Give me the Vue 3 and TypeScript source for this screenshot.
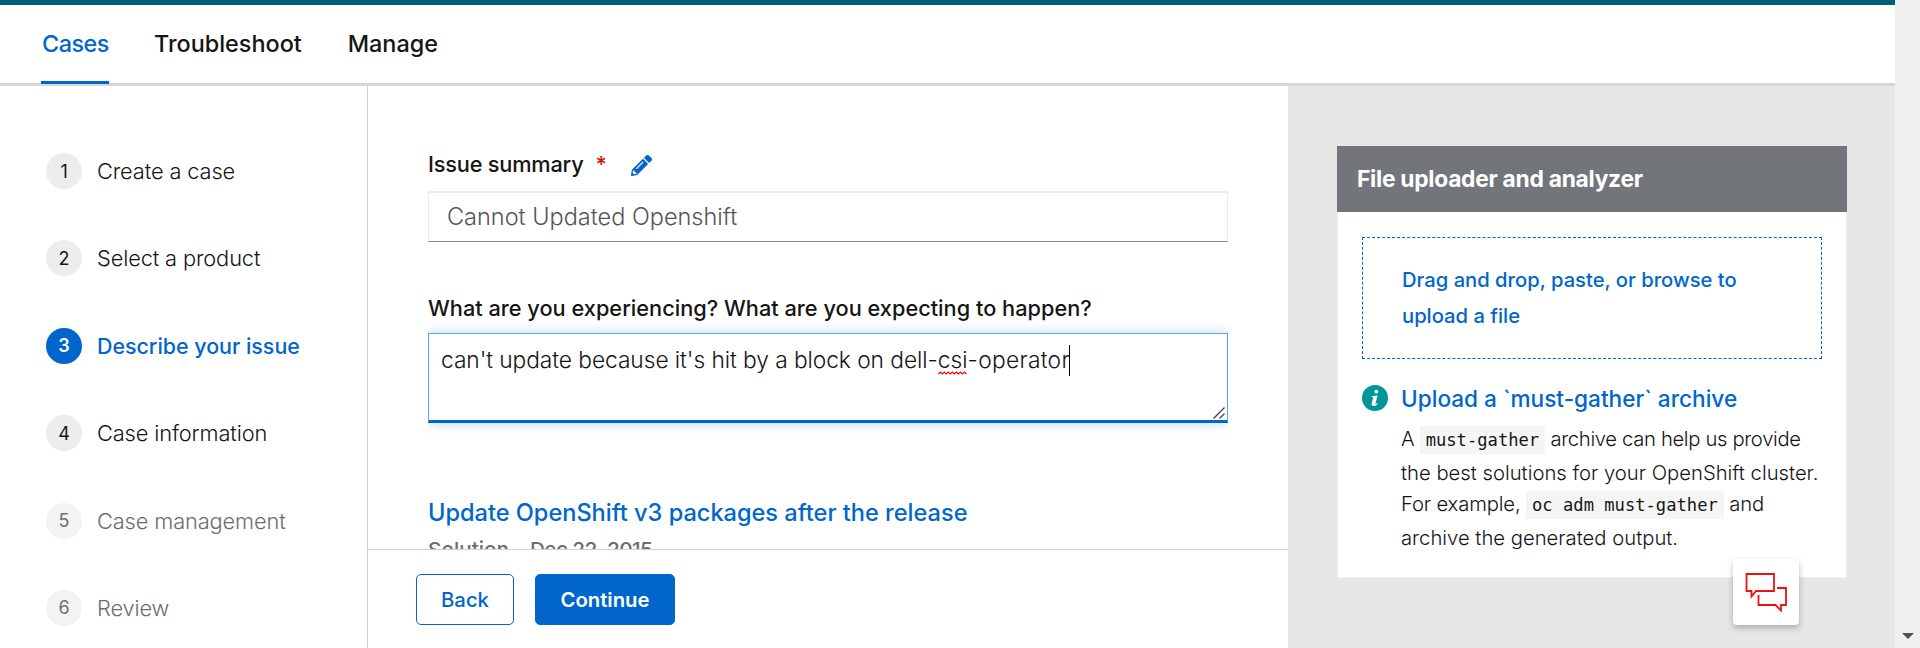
<script setup lang="ts">
interface Step {
  label: string
  state: 'open' | 'current' | 'disabled'
}

const tabs: string[] = ['Cases', 'Troubleshoot', 'Manage']

const steps: Step[] = [
  { label: 'Create a case', state: 'open' },
  { label: 'Select a product', state: 'open' },
  { label: 'Describe your issue', state: 'current' },
  { label: 'Case information', state: 'open' },
  { label: 'Case management', state: 'disabled' },
  { label: 'Review', state: 'disabled' },
]

const summary = 'Cannot Updated Openshift'
</script>

<template>
  <div class="window">
    <div class="page">
      <nav class="tabs">
        <a v-for="(tab, i) in tabs" :key="tab" class="tab" :class="{ active: i === 0 }">{{ tab }}</a>
      </nav>

      <div class="body">
        <aside class="steps">
          <div v-for="(step, i) in steps" :key="step.label" class="step" :class="step.state">
            <span class="num">{{ i + 1 }}</span>
            <span class="label">{{ step.label }}</span>
          </div>
        </aside>

        <main class="main">
          <div class="form">
            <div class="field-label">
              <span class="summary-label">Issue summary</span>
              <span class="required">*</span>
              <svg class="pencil" viewBox="0 0 512 512">
                <path
                  d="M498 142l-46 46c-5 5-13 5-17 0L324 77c-5-5-5-12 0-17l46-46c19-19 49-19 68 0l60 60c19 19 19 49 0 68zm-214-42L22 362 0 484c-3 16 12 30 28 28l122-22 262-262c5-5 5-13 0-17L301 100c-4-5-12-5-17 0zM124 340c-5-6-5-14 0-20l154-154c6-5 14-5 20 0s5 14 0 20L144 340c-6 5-14 5-20 0zm-36 84h48v36l-64 12-32-32 12-64h36v48z"
                />
              </svg>
            </div>
            <input class="summary" type="text" :value="summary" />

            <div class="field-label question">What are you experiencing? What are you expecting to happen?</div>
            <div class="textarea">
              <span class="typed">can't update because it's hit by a block on dell-</span><span class="misspelt">csi<svg class="squiggle" viewBox="0 0 29 4"><path d="M0 3l2-2 2 2 2-2 2 2 2-2 2 2 2-2 2 2 2-2 2 2 2-2 2 2 2-2 2 2" /></svg></span><span class="tail">-operator</span><span class="caret"></span>
              <svg class="grip" viewBox="0 0 12 12"><path d="M.5 11.5l11-11M6.5 11.5l5-5" /></svg>
            </div>

            <a class="result">Update OpenShift v3 packages after the release</a>
            <div class="meta"><span>Solution</span><span class="date">Dec 22, 2015</span></div>
          </div>

          <footer class="actions">
            <button class="btn back">Back</button>
            <button class="btn continue">Continue</button>
          </footer>
        </main>

        <aside class="side">
          <section class="card">
            <h2>File uploader and analyzer</h2>
            <div class="card-body">
              <div class="drop">Drag and drop, paste, or browse to<br />upload a file</div>
              <div class="tip">
                <svg class="info" viewBox="0 0 512 512">
                  <path
                    fill-rule="evenodd"
                    d="M256 0a256 256 0 1 0 0 512a256 256 0 1 0 0-512zM282 92a38 38 0 1 1 0 76a38 38 0 1 1 0-76zM190 220l104-14c8-1 12 4 10 12l-37 142c-3 13 4 17 14 8l14-14 14 14c-26 34-54 50-84 46-32-4-42-24-34-56l28-108c3-10-2-14-12-14h-20z"
                  />
                </svg>
                <div class="tip-text">
                  <a class="tip-title">Upload a `must-gather` archive</a>
                  <div class="line snug">A <code>must-gather</code> archive can help us provide</div>
                  <div class="line">the best solutions for your OpenShift cluster.</div>
                  <div class="line tight">For example, <code>oc adm must-gather</code> and</div>
                  <div class="line">archive the generated output.</div>
                </div>
              </div>
            </div>
          </section>
        </aside>
      </div>

      <div class="chat">
        <svg viewBox="0 0 42 39">
          <path d="M1.500 1h27.500v17H11L6.500 23.500V18h-5z" />
          <path d="M32 15h9v17h-5v5.500L30.500 32H13.500V22" />
        </svg>
      </div>
    </div>

    <div class="scrollbar"><span class="arrow"></span></div>
  </div>
</template>

<style>
html,
body {
  margin: 0;
  overflow: hidden;
}
</style>

<style scoped>
.window {
  display: flex;
  width: 1920px;
  height: 648px;
  overflow: hidden;
  background: #fff;
  color: #151515;
  font-family: Inter, "Open Sans", sans-serif;
  font-weight: 300;
}
.window * {
  box-sizing: border-box;
}
.page {
  position: relative;
  display: flex;
  flex-direction: column;
  width: 1895px;
  height: 648px;
  border-top: 5px solid #005f78;
}
.scrollbar {
  display: flex;
  flex: 1;
  align-items: flex-end;
  justify-content: center;
  padding-bottom: 9px;
  background: #f0f0f0;
}
.arrow {
  border: 6px solid transparent;
  border-top-color: #505050;
  border-bottom: 0;
}

.tabs {
  display: flex;
  flex: none;
  gap: 44px;
  height: 81px;
  padding-left: 41px;
  border-bottom: 3px solid #d6d6d6;
}
.tab {
  height: 79px;
  padding: 0 1px;
  line-height: 77px;
  font-size: 23.4px;
  font-weight: 500;
}
.tab.active {
  width: 68px;
  border-bottom: 3px solid #06c;
  color: #06c;
  letter-spacing: -0.5px;
}

.body {
  display: flex;
  flex: 1;
  min-height: 0;
}

.steps {
  display: flex;
  flex: none;
  flex-direction: column;
  gap: 51.4px;
  width: 368px;
  padding: 67px 0 0 46px;
  border-right: 1px solid #d2d2d2;
}
.step {
  display: flex;
  flex: none;
  align-items: center;
  gap: 15px;
  height: 36px;
  font-size: 21.8px;
  letter-spacing: -0.12px;
}
.num {
  display: flex;
  align-items: center;
  justify-content: center;
  width: 36px;
  height: 36px;
  border-radius: 50%;
  background: #ededed;
  font-size: 18px;
  font-weight: 400;
}
.current {
  color: #06c;
  font-size: 21.4px;
  font-weight: 500;
  letter-spacing: 0;
}
.current .num {
  background: #06c;
  color: #fff;
  font-weight: 600;
}
.disabled {
  color: #6a6e73;
}
.disabled .num {
  background: #f3f3f3;
}

.main {
  display: flex;
  flex: none;
  flex-direction: column;
  width: 920px;
}
.form {
  flex: 1;
  min-height: 0;
  padding: 63px 60px 0;
  overflow: hidden;
}
.field-label {
  display: flex;
  align-items: center;
  height: 30px;
  font-size: 21.75px;
  font-weight: 500;
}
.summary-label {
  letter-spacing: -0.2px;
}
.required {
  margin-left: 12px;
  color: #c9190b;
}
.pencil {
  width: 21px;
  height: 21px;
  margin: 2px 0 0 24px;
  fill: #06c;
}
.summary {
  display: block;
  width: 800px;
  height: 51px;
  margin-top: 12px;
  padding: 0 0 1px 18px;
  border: 1px solid #ededed;
  border-top-width: 2px;
  border-bottom: 1px solid #8a8d90;
  outline: 0;
  color: #555;
  font-family: inherit;
  font-size: 23.5px;
  font-weight: 300;
}
.question {
  margin-top: 51px;
  white-space: nowrap;
}
.textarea {
  position: relative;
  width: 800px;
  height: 90px;
  margin-top: 10px;
  padding: 9px 12px;
  border: 1px solid #5ba8e6;
  border-bottom: 3px solid #06c;
  box-shadow: 0 0 12px rgba(0, 110, 210, 0.28);
  clip-path: inset(-14px 0 -14px 0);
  font-size: 22.78px;
  line-height: 34px;
  white-space: nowrap;
}
.typed {
  letter-spacing: -0.07px;
}
.misspelt {
  position: relative;
}
.tail {
  letter-spacing: 0.3px;
}
.squiggle {
  position: absolute;
  left: 0;
  bottom: -2px;
  width: 100%;
  height: 4px;
  fill: none;
  stroke: #f00;
  stroke-width: 1.1;
}
.caret {
  display: inline-block;
  width: 1px;
  height: 31px;
  margin-left: -1px;
  background: #000;
  vertical-align: -8px;
}
.grip {
  position: absolute;
  right: 2px;
  bottom: 1px;
  width: 12px;
  height: 12px;
  fill: none;
  stroke: #444;
  stroke-width: 1.3;
}
.result {
  display: block;
  margin-top: 75px;
  color: #06c;
  font-size: 23.56px;
  font-weight: 500;
  line-height: 30px;
  white-space: nowrap;
}
.meta {
  display: flex;
  gap: 21px;
  margin-top: 8px;
  color: #6a6e73;
  font-size: 20.76px;
  font-weight: 500;
  line-height: 28px;
}
.date {
  letter-spacing: -0.6px;
}

.actions {
  display: flex;
  flex: none;
  align-items: flex-start;
  gap: 21px;
  height: 99px;
  padding: 24px 0 0 48px;
  border-top: 1px solid #d2d2d2;
  background: #fff;
}
.btn {
  height: 51px;
  padding: 0;
  border: 1px solid #06c;
  border-radius: 5px;
  font-family: inherit;
  font-size: 20.28px;
  font-weight: 600;
}
.back {
  width: 98px;
  background: #fff;
  color: #06c;
  font-weight: 500;
}
.continue {
  width: 140px;
  background: #06c;
  color: #fff;
}

.side {
  flex: 1;
  padding: 60px 48px 0 49px;
  background: #e6e6e6;
}
.card {
  width: 510px;
  height: 432px;
  border: 1px solid #eee;
  border-top: 0;
  background: #fff;
}
.card h2 {
  height: 66px;
  margin: 0 -1px;
  padding-left: 20px;
  background: #72767b;
  color: #fff;
  font-size: 22.8px;
  font-weight: 700;
  letter-spacing: -0.28px;
  line-height: 66px;
}
.card-body {
  padding: 25px 24px 0;
}
.drop {
  width: 460px;
  height: 122px;
  padding: 24px 0 0 39px;
  border: 1px dashed #06c;
  color: #06c;
  font-size: 20.2px;
  font-weight: 500;
  line-height: 36px;
  white-space: nowrap;
}
.tip {
  display: flex;
  gap: 13px;
  padding-top: 24px;
}
.info {
  flex: none;
  width: 26px;
  height: 26px;
  margin-top: 2px;
  fill: #009596;
}
.tip-text {
  white-space: nowrap;
}
.tip-title {
  display: block;
  margin-bottom: 9px;
  color: #06c;
  font-size: 22.6px;
  font-weight: 500;
  line-height: 32px;
}
.line {
  height: 30px;
  margin-bottom: 4px;
  font-size: 20.25px;
  line-height: 30px;
}
.line.snug {
  letter-spacing: -0.35px;
}
.line.tight {
  margin-top: -3px;
  letter-spacing: -0.15px;
}
code {
  display: inline-block;
  height: 28px;
  padding: 0 6px;
  background: #f5f5f5;
  font-family: "DejaVu Sans Mono", monospace;
  font-size: 17.15px;
  font-weight: 400;
  letter-spacing: 0;
  line-height: 28px;
}

.chat {
  position: absolute;
  left: 1733px;
  top: 554px;
  width: 66px;
  height: 66px;
  padding: 14px 12px;
  border-radius: 4px;
  background: #fff;
  box-shadow: 0 3px 6px rgba(0, 0, 0, 0.25);
}
.chat svg {
  display: block;
  width: 42px;
  height: 39px;
  fill: none;
  stroke: #f01010;
  stroke-width: 1.8;
}
</style>
